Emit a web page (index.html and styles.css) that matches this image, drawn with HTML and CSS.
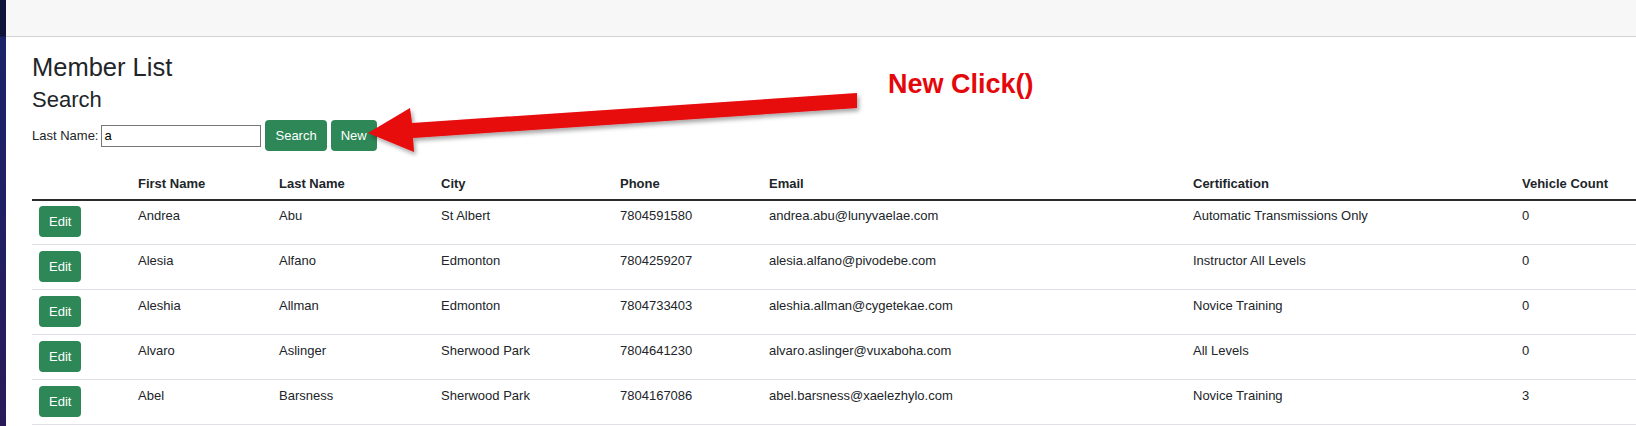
FILE: index.html
```html
<!DOCTYPE html>
<html lang="en">
<head>
<meta charset="utf-8">
<title>Member List</title>
<link rel="stylesheet" href="styles.css">
</head>
<body>
<div class="strip"></div>
<div class="page">
  <div class="topbar"></div>
  <main class="content">
    <h1 class="title">Member List</h1>
    <h2 class="subtitle">Search</h2>
    <form class="search-row">
      <label class="search-label" for="ln">Last Name:</label>
      <input class="search-input" id="ln" type="text" value="a">
      <button type="button" class="btn">Search</button>
      <button type="button" class="btn">New</button>
    </form>
    <table class="members">
      <colgroup>
        <col class="c-edit"><col class="c-first"><col class="c-last"><col class="c-city"><col class="c-phone"><col class="c-email"><col class="c-cert"><col class="c-veh">
      </colgroup>
      <thead>
        <tr><th></th><th>First Name</th><th>Last Name</th><th>City</th><th>Phone</th><th>Email</th><th>Certification</th><th>Vehicle Count</th></tr>
      </thead>
      <tbody>
        <tr><td><button type="button" class="btn">Edit</button></td><td>Andrea</td><td>Abu</td><td>St Albert</td><td>7804591580</td><td>andrea.abu@lunyvaelae.com</td><td>Automatic Transmissions Only</td><td>0</td></tr>
        <tr><td><button type="button" class="btn">Edit</button></td><td>Alesia</td><td>Alfano</td><td>Edmonton</td><td>7804259207</td><td>alesia.alfano@pivodebe.com</td><td>Instructor All Levels</td><td>0</td></tr>
        <tr><td><button type="button" class="btn">Edit</button></td><td>Aleshia</td><td>Allman</td><td>Edmonton</td><td>7804733403</td><td>aleshia.allman@cygetekae.com</td><td>Novice Training</td><td>0</td></tr>
        <tr><td><button type="button" class="btn">Edit</button></td><td>Alvaro</td><td>Aslinger</td><td>Sherwood Park</td><td>7804641230</td><td>alvaro.aslinger@vuxaboha.com</td><td>All Levels</td><td>0</td></tr>
        <tr><td><button type="button" class="btn">Edit</button></td><td>Abel</td><td>Barsness</td><td>Sherwood Park</td><td>7804167086</td><td>abel.barsness@xaelezhylo.com</td><td>Novice Training</td><td>3</td></tr>
      </tbody>
    </table>
  </main>
</div>
<svg class="arrow" width="1636" height="426" viewBox="0 0 1636 426" aria-hidden="true">
  <defs>
    <filter id="sh" x="-10%" y="-50%" width="120%" height="200%">
      <feDropShadow dx="2" dy="3" stdDeviation="2" flood-color="#000" flood-opacity="0.35"/>
    </filter>
  </defs>
  <polygon filter="url(#sh)" fill="#e8080b" points="368,133 410,108 412,123 857,93 857,108 413,138 414,152"/>
</svg>
<div class="note">New Click()</div>
</body>
</html>
```
FILE: styles.css
```css
html, body {
  margin: 0;
  padding: 0;
  height: 426px;
  overflow: hidden;
  background: #fff;
}
body {
  position: relative;
  display: flex;
  font-family: "Liberation Sans", Arial, sans-serif;
  color: #212529;
  font-size: 13px;
  line-height: 19.5px;
}
.strip {
  width: 6px;
  flex: 0 0 6px;
  background: linear-gradient(to bottom, #0d1438 0, #0d1438 36px, #1a2369 37px, #231e62 60%, #2a1a5a 100%);
}
.page {
  flex: 1;
  min-width: 0;
}
.topbar {
  height: 36px;
  background: #f7f7f7;
  border-bottom: 1px solid #d3d3d3;
}
.content {
  padding-left: 26px;
}
.title {
  margin: 15px 0 0;
  font-size: 25.5px;
  line-height: 30px;
  font-weight: normal;
}
.subtitle {
  margin: 5px 0 0;
  font-size: 22px;
  line-height: 26px;
  font-weight: normal;
}
.search-row {
  margin: 7px 0 0;
  display: flex;
  align-items: center;
  gap: 4px;
  height: 31px;
}
.search-label {
  font-size: 13px;
  margin-right: -1px;
}
.search-input {
  box-sizing: border-box;
  width: 160px;
  height: 22px;
  margin: 0;
  padding: 0 2px;
  border: 1px solid #767676;
  font-family: "Liberation Sans", Arial, sans-serif;
  font-size: 13px;
  color: #000;
  background: #fff;
}
.btn {
  box-sizing: border-box;
  height: 31px;
  padding: 0 10px;
  border: none;
  border-radius: 4px;
  background: #2d8756;
  color: #fff;
  font-family: "Liberation Sans", Arial, sans-serif;
  font-size: 13px;
  line-height: 31px;
  cursor: pointer;
}
.members {
  margin-top: 16px;
  width: 1604px;
  table-layout: fixed;
  border-collapse: collapse;
}
.c-edit { width: 99px; }
.c-first { width: 141px; }
.c-last { width: 162px; }
.c-city { width: 179px; }
.c-phone { width: 149px; }
.c-email { width: 424px; }
.c-cert { width: 329px; }
.c-veh { width: 121px; }
.members th {
  text-align: left;
  font-weight: bold;
  padding: 7px 7px 5px;
  vertical-align: bottom;
  border-bottom: 2px solid #2b2b2b;
  white-space: nowrap;
}
.members td {
  padding: 6px 7px 7px;
  vertical-align: top;
  border-bottom: 1px solid #dee2e6;
  white-space: nowrap;
}
.members tbody tr:first-child td {
  padding-top: 5px;
}
.members td .btn {
  display: block;
}
.arrow {
  position: absolute;
  left: 0;
  top: 0;
  pointer-events: none;
}
.note {
  position: absolute;
  left: 888px;
  top: 71px;
  font-size: 27px;
  line-height: 27px;
  font-weight: bold;
  color: #e5080b;
  white-space: nowrap;
}
```
